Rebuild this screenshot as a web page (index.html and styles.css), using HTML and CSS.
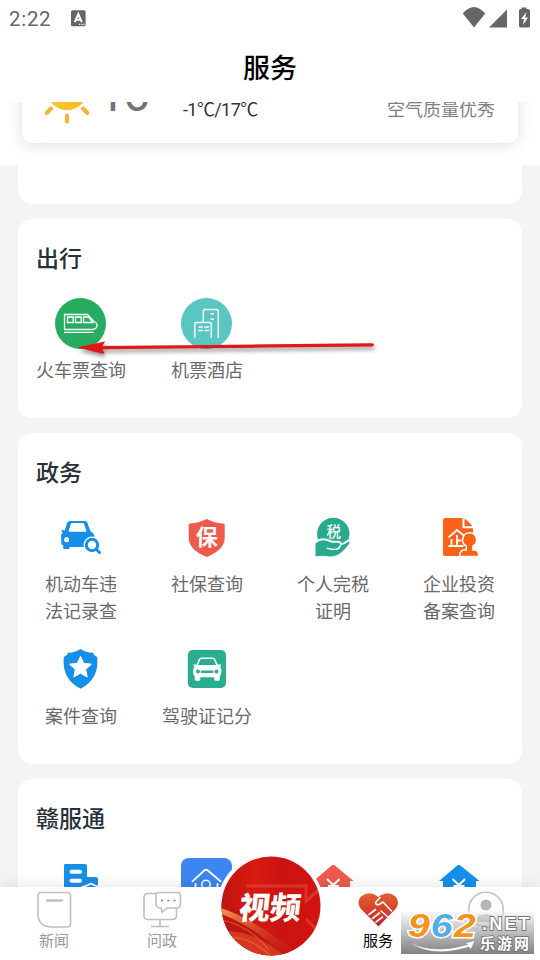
FILE: index.html
```html
<!DOCTYPE html>
<html lang="zh-CN">
<head>
<meta charset="utf-8">
<title>服务</title>
<link rel="stylesheet" href="styles.css">
</head>
<body>
<div class="app">
  <header class="top">
    <div class="status">
      <span class="clock">2:22</span>
      <svg class="ime" width="15" height="17" viewBox="71 10 15 17"><rect x="71" y="10.300" width="14.600" height="16" rx="1.500" fill="#666"/><path d="M74.800 22.200 78.300 14l3.500 8.200M76 19.700h4.600" fill="none" stroke="#fff" stroke-width="2"/><path d="M79 24.300h6" stroke="#fff" stroke-width="1.200" stroke-dasharray="1.200 1"/></svg>
      <svg class="signals" width="70" height="22" viewBox="462 6 70 22" fill="#666">
        <path d="M462.800 12.500Q474-.500 485.200 12.500L474 26.500z" transform="translate(0 1)"/>
        <path d="M489 27.500 507 9.500v18z"/>
        <path d="M521.500 7.500h5v1.500h1.500q2 0 2 1.500v15.500q0 1.500-1.500 1.500h-8q-1.500 0-1.500-1.500V10.500q0-1.500 1.500-1.500h1z"/>
        <path d="m526.500 12-5.500 7h3l-1 6 5-7.500h-3z" fill="#fff"/>
      </svg>
    </div>
    <h1>服务</h1>
  </header>

  <main class="content">
    <section class="weather">
      <div class="weather-card">
        <svg class="sun" width="50" height="44" viewBox="42 81 50 44">
          <defs><linearGradient id="sun" x1="0" y1="0" x2="1" y2="1"><stop offset="0" stop-color="#ffd84a"/><stop offset="1" stop-color="#f7b51b"/></linearGradient></defs>
          <circle cx="67" cy="90" r="20" fill="url(#sun)"/>
          <path d="m51 108.500-4.300 4.500M83 108.500l4.300 4.500M67 115.500v6" stroke="#f4b42b" stroke-width="4" stroke-linecap="round"/>
        </svg>
        <span class="temp">16</span>
        <span class="range">-1℃/17℃</span>
        <span class="air">空气质量优秀</span>
      </div>
    </section>
    <section class="card tail"></section>

    <section class="card">
      <h2>出行</h2>
      <div class="grid">
        <div class="item">
          <svg viewBox="55 298 52 52"><circle cx="80.500" cy="323.500" r="25.500" fill="#27ad60"/><g fill="none" stroke="#fff" stroke-width="1.300"><path d="M64.500 314.500h23l6 6.500q4 2 3.500 5-.5 3-4 3.500H64.500zM64 332.300h29.500M67.500 317h5.700v5.500h-5.700zM75.500 317h5.700v5.500h-5.700zM83.500 317h5l4.500 5.500h-9.500z"/></g></svg>
          <span>火车票查询</span>
        </div>
        <div class="item">
          <svg viewBox="181 298 52 52"><circle cx="206.500" cy="323.500" r="25.500" fill="#59c6c2"/><g fill="none" stroke="#fff" stroke-width="1.500"><path d="M194.700 338v-13.500q0-2 2-2h12.600q2 0 2 2V338M203.300 322v-10.500q0-2 2-2h11q2 0 2 2V338M210.500 313.800h3.500M210.500 319.200h3.500M198.500 327h4.300M204.500 327h4.300M198.500 330.600h4.300M204.500 330.600h4.300"/></g></svg>
          <span>机票酒店</span>
        </div>
      </div>
    </section>

    <section class="card">
      <h2>政务</h2>
      <div class="grid">
        <div class="item">
          <svg viewBox="55 512 52 52"><path d="m64.500 531 2.800-8.500q.6-1.500 2.500-1.500h15q1.900 0 2.500 1.500l3 8.500q4 2 4.200 6v10H69.500v1.300q0 .8-1 .8h-4.300q-1 0-1-1V540q-2-1-2-4 0-3.500 3.300-5z" fill="#168fe8"/><path d="m68.500 531.700 2.200-7.700q.4-1 1.400-1h10.700q1 0 1.400 1l2.300 7.700z" fill="#fff"/><circle cx="66.500" cy="539.700" r="2.500" fill="#fff"/><path d="m61.800 530.800 4 1.200" stroke="#168fe8" stroke-width="2"/><path d="M61.300 534.500h4v10.500h-2.500q-1.500 0-1.500-1.500z" fill="#168fe8"/><circle cx="66.500" cy="539.700" r="2.500" fill="#fff"/><circle cx="92" cy="545" r="8.500" fill="#fff"/><circle cx="92" cy="545" r="5.700" fill="#fff" stroke="#168fe8" stroke-width="3"/><path d="m96.500 549.500 3 3" stroke="#168fe8" stroke-width="3" stroke-linecap="round"/></svg>
          <span>机动车违<br>法记录查</span>
        </div>
        <div class="item">
          <svg viewBox="181 512 52 52"><path d="M206.700 519q8 4 16.500 4.500 1.500.2 1.500 1.800v12.500q0 12-18 19.200-18-7.200-18-19.200v-12.500q0-1.600 1.500-1.800 8.500-.5 16.500-4.500z" fill="#ee5b4c"/><text x="206.800" y="545" class="glyph bold" font-size="22">保</text></svg>
          <span>社保查询</span>
        </div>
        <div class="item">
          <svg viewBox="307 512 52 52"><circle cx="333.300" cy="534" r="16.200" fill="#27ab8c"/><path d="M315.500 543.500q5.500-4.500 10.500-2.800l5.500 2h6.500q2.800.8 2.300 2.800 4-.5 7.500-3.600 2.200-1 1.500 1.500-6 8.500-12 11.600-4 2-9 1.300-7.500-1-12.800.2z" fill="#27ab8c" stroke="#fff" stroke-width="4" paint-order="stroke"/><path d="M327 548.200q4 1.600 9.500 1 3.200-.6 3.800-3.700" fill="none" stroke="#fff" stroke-width="1.400" stroke-linecap="round"/><text x="333.700" y="536.500" class="glyph medium" font-size="14.500">税</text></svg>
          <span>个人完税<br>证明</span>
        </div>
        <div class="item">
          <svg viewBox="433 512 52 52"><path d="M445.500 518h17.300l10.200 10v24q0 4-3 4h-24.500q-2.500 0-2.500-2.500v-33q0-2.500 2.500-2.500z" fill="#fa6317"/><path d="M463.500 517v10.200H474" fill="none" stroke="#fff" stroke-width="2"/><path d="m465 518.500 7.500 7.500H465z" fill="#fa6317"/><path d="m448.500 537.500 8.500-7.500 8.500 7M457 535v10.500M451.500 539v6.500M448.500 546h15M457 540.500h4.500" fill="none" stroke="#fff" stroke-width="1.800"/><path d="M469.500 533.500a6.300 6.300 0 0 1 2.700 12v5.200h3q2.800.4 2.800 5h-17.500q0-4.600 3.300-5h3.200v-5.200a6.300 6.300 0 0 1 2.500-12z" fill="#fa6317" stroke="#fff" stroke-width="3" paint-order="stroke"/></svg>
          <span>企业投资<br>备案查询</span>
        </div>
        <div class="item">
          <svg viewBox="55 644 52 52"><path d="M80.500 649q4 2.800 8.500 3.500l4 .3q.5 2.700 3.500 3.700.8.300.8 1.800 1.700 21-16.800 30.500-18.500-9.500-16.800-30.500 0-1.500.8-1.800 3-1 3.500-3.700l4-.3q4.500-.7 8.500-3.500z" fill="#168fe8"/><path d="m80.500 656.300 3.200 7 7.700.9-5.700 5.200 1.500 7.600-6.700-3.800-6.700 3.800 1.500-7.600-5.700-5.200 7.700-.9z" fill="#fff" stroke="#fff" stroke-linejoin="round"/></svg>
          <span>案件查询</span>
        </div>
        <div class="item">
          <svg viewBox="181 644 52 52"><rect x="187.800" y="650" width="38.200" height="38" rx="5" fill="#2aae90"/><path d="m196.800 666 2.600-6.300q.6-1.500 2.300-1.500h10.800q1.700 0 2.300 1.500l2.600 6.300z" fill="#2aae90" stroke="#fff" stroke-width="1.600"/><path d="M197 665h20.500q4 1.500 4 6.200 0 3.300-1.700 5.300v3q0 1.300-1.300 1.300h-3q-1.200 0-1.200-1.300v-2.200h-14v2.200q0 1.300-1.300 1.300h-3q-1.300 0-1.300-1.300v-3q-1.700-2-1.700-5.300 0-4.700 4-6.200z" fill="#fff"/><path d="M193.500 665.300h4M217 665.300h4" stroke="#fff" stroke-width="1.800"/><circle cx="198" cy="671.500" r="2" fill="#2aae90"/><circle cx="216.500" cy="671.500" r="2" fill="#2aae90"/><path d="M202 671.700h10.500" stroke="#2aae90" stroke-width="2.400" stroke-linecap="round"/></svg>
          <span>驾驶证记分</span>
        </div>
      </div>
    </section>

    <section class="card">
      <h2>赣服通</h2>
      <div class="grid">
        <div class="item"><svg viewBox="55 858 52 52"><path d="M65 864h20q2 0 2 2v11h8.500q2.500 0 2.500 2.500V905H64V865.500q0-1.500 1-1.500z" fill="#168fe8"/><path d="M71.500 871.700h8.500M71.500 880.800h8.500" stroke="#fff" stroke-width="4" stroke-linecap="round"/><path d="M82 887q4-.5 9-3.500 5 3 9 3.500v8H82z" fill="#168fe8" stroke="#fff" stroke-width="1.500"/></svg></div>
        <div class="item"><svg viewBox="181 858 52 52"><rect x="181" y="858" width="51" height="51" rx="8" fill="#3c86f1"/><path d="m192.500 881.300 12-11q1.500-1.200 3 0l13 11M195.500 884v16M217.500 884v16" fill="none" stroke="#fff" stroke-width="1.800" stroke-linecap="round"/><circle cx="206" cy="884.500" r="4.200" fill="none" stroke="#fff" stroke-width="1.500"/></svg></div>
        <div class="item"><svg viewBox="307 858 52 52"><path d="m332 865.300q1.300-1 2.600 0L353.500 881H350v22h-33v-22h-3.500z" fill="#ee5b4c"/><path d="m327 879 6.300 6 6.300-6M333.300 885v10M328 886h11" fill="none" stroke="#fff" stroke-width="2"/></svg></div>
        <div class="item"><svg viewBox="433 858 52 52"><path d="m457.500 865.300q1.300-1 2.600 0L479.500 881H476v22h-33v-22h-4z" fill="#168fe8"/><path d="m452.500 879 6.300 6 6.300-6M458.800 885v10M453.500 886h11" fill="none" stroke="#fff" stroke-width="2"/></svg></div>
      </div>
    </section>
  </main>

  <nav class="tabs">
    <div class="tab">
      <svg viewBox="36 890 36 38"><path d="M41 892.500h26.500q3 0 3 3v28.500q0 3-3 3H50.500Q38 926 38 914v-18.500q0-3 3-3z"/><path d="M47 900.500h15" stroke-width="2.400" stroke-linecap="round"/></svg>
      <span>新闻</span>
    </div>
    <div class="tab">
      <svg viewBox="143 890 40 38"><path d="M157 893.500h-8q-4 0-4 4v18q0 4 4 4h24.500q4 0 4-4v-7M161 920v6M152 926.500h18"/><path d="M160 892.500h18q3.500 0 3.500 3.500v8q0 4-4 4h-9.500l-5 4.300-1-4.300q-5 0-5-4v-8q0-3.500 3-3.500z"/><path d="M162 900.500h14.500" stroke="#888" stroke-dasharray="2.200 4"/></svg>
      <span>问政</span>
    </div>
    <div class="tab"></div>
    <div class="tab active">
      <svg viewBox="357 890 42 38"><defs><linearGradient id="heart" x1="0" y1="0" x2="0" y2="1"><stop offset="0" stop-color="#e26232"/><stop offset="1" stop-color="#c71e24"/></linearGradient></defs><path d="M378.500 926.500 361 909q-5-7 0-12.500 9-6.500 17.500.5 9-7 17-.5 5 5.500 0 12.500z" fill="url(#heart)" stroke="none"/><g stroke="#fff" stroke-width="1.600" stroke-linecap="round" stroke-linejoin="round"><path d="m380 897.500-4.500 5q.5 3 3.500 2l4-2.500 8.500 9M369 914.500l6.500-5M372.500 918.500l7-5.500M376 922l6.500-5M381 911l7 6"/></g></svg>
      <span>服务</span>
    </div>
    <div class="tab">
      <svg viewBox="466 890 40 38"><circle cx="486" cy="909.500" r="17.300"/><circle cx="486" cy="905" r="5.500" fill="#b5b5b8" stroke="none"/><path d="M475 922q2-8 11-8t11 8z" fill="#c4c4c6" stroke="none"/></svg>
    </div>
  </nav>

  <div class="video">
    <svg width="100" height="100" viewBox="0 0 100 100">
      <defs>
        <linearGradient id="red" x1="0" y1="0" x2="1" y2="0"><stop offset="0" stop-color="#bf1310"/><stop offset=".35" stop-color="#d91b12"/><stop offset=".6" stop-color="#c91411"/><stop offset="1" stop-color="#d5130f"/></linearGradient>
        <linearGradient id="gold" x1="0" y1="0" x2="1" y2="1"><stop offset="0" stop-color="#f29a50"/><stop offset="1" stop-color="#d7261a" stop-opacity="0"/></linearGradient>
        <clipPath id="disc"><circle cx="50" cy="50" r="49.500"/></clipPath>
      </defs>
      <g clip-path="url(#disc)">
        <rect width="100" height="100" fill="url(#red)"/>
        <path d="M0 46Q35 62 72 100H0z" fill="#bd1710"/>
        <path d="M0 52Q36 64 78 100L60 96Q30 69 0 58z" fill="url(#gold)"/>
        <path d="M4 75Q32 74 64 100H20z" fill="#e2452c" opacity=".7"/>
        <path d="M10 82q18-2 40 18M0 64q28 5 48 30" fill="none" stroke="#f28b47" stroke-width="1.200" opacity=".5"/>
        <path d="M25 30h60v15l14-12M85 63l13 13" fill="none" stroke="#ec5142" stroke-width="3" opacity=".5"/>
      </g>
    </svg>
    <b>视频</b>
  </div>

  <svg class="arrow" width="306" height="24" viewBox="74 336 306 24"><path d="M77 347.500 105 341.500l-2.500 4.500L372 343.300q2 0 2 1.500t-2 1.700L102.500 349.300l2 4.700z" fill="#e3161a"/></svg>

  <div class="watermark">
    <div class="wm-num"><i class="orange">9</i><i class="blue">6</i><i class="orange">2</i></div>
    <div class="wm-side"><b class="net">.NET</b><b class="cn">乐游网</b></div>
    <svg class="swoosh" width="72" height="16" viewBox="406 938 72 16"><path d="M407.500 940q24 14 60 3.500l-2.500-1.500 10-2.500-4 9-2-2.500q-39 12-61.500-6z" fill="#fff" stroke="#888" stroke-width=".6"/></svg>
  </div>
</div>
</body>
</html>
```

FILE: styles.css
```css
* { box-sizing: border-box; }
body {
  margin: 0;
  font-family: Roboto, "Noto Sans CJK SC", sans-serif;
  background: #f4f4f4;
}
.app {
  position: relative;
  display: flex;
  flex-direction: column;
  width: 540px;
  height: 960px;
  overflow: hidden;
}
.top {
  flex: none;
  height: 102px;
  background: #fff;
}
.status {
  display: flex;
  align-items: center;
  height: 36px;
  padding: 0 8px 0 9px;
}
.clock {
  width: 62px;
  font-size: 20.5px;
  letter-spacing: .7px;
  color: #666;
  padding-top: 2px;
}
.signals { margin-left: auto; margin-bottom: 2px; }
h1 {
  margin: 0;
  height: 66px;
  line-height: 66px;
  text-align: center;
  font-size: 27px;
  font-weight: 500;
  color: #000;
}
.content { flex: 1; min-height: 0; overflow: hidden; }
.weather {
  display: flow-root;
  height: 63px;
  padding: 0 22px;
  background: #fff;
}
.weather-card {
  display: flex;
  height: 71px;
  margin-top: -30px;
  border-radius: 10px;
  background: #fff;
  box-shadow: 0 2px 16px rgba(0, 0, 0, .13);
}
.sun { margin: 9px 0 0 20px; }
.temp {
  width: 76px;
  margin: -5px 0 0 6px;
  font-size: 48px;
  line-height: 56px;
  letter-spacing: -2px;
  color: #737373;
}
.range {
  margin: 25px 0 0 9px;
  font-size: 18px;
  line-height: 26px;
  letter-spacing: -.6px;
  color: #333;
}
.air {
  margin: 25px 23px 0 auto;
  font-size: 18px;
  line-height: 26px;
  color: #808080;
}
.card {
  margin: 0 18px 15px;
  padding: 21px 0 34px;
  border-radius: 14px;
  background: #fff;
}
.card.tail {
  height: 39px;
  padding: 0;
  border-radius: 0 0 14px 14px;
}
.card:last-child { border-radius: 14px 14px 0 0; height: 200px; }
h2 {
  margin: 0 0 18px 18px;
  font-size: 23px;
  line-height: 40px;
  font-weight: 500;
  color: #28313a;
}
.grid {
  display: grid;
  grid-template-columns: repeat(4, 126px);
  row-gap: 19px;
}
.item {
  display: flex;
  flex-direction: column;
  align-items: center;
}
.item svg { width: 52px; height: 52px; margin-bottom: 7px; }
.item span {
  font-size: 18px;
  line-height: 27px;
  text-align: center;
  color: #6a6a6a;
}
.glyph {
  font-family: "Noto Sans CJK SC", sans-serif;
  fill: #fff;
  text-anchor: middle;
}
.bold { font-weight: 700; }
.medium { font-weight: 500; }
.tabs {
  flex: none;
  position: relative;
  display: flex;
  height: 73px;
  background: #fff;
  box-shadow: 0 -2px 12px rgba(0, 0, 0, .09);
}
.tab {
  width: 108px;
  padding-top: 3px;
  display: flex;
  flex-direction: column;
  align-items: center;
  font-size: 15px;
  line-height: 22px;
  color: #999;
}
.tab svg {
  height: 38px;
  margin-bottom: 2px;
  fill: none;
  stroke: #c0c0c2;
  stroke-width: 1.6;
}
.tab.active { color: #000; }
.video {
  position: absolute;
  left: 217px;
  top: 853px;
  width: 107px;
  height: 107px;
  padding: 3px 3.5px;
  border-radius: 50%;
  background: #fff;
}
.video svg { display: block; }
.video b {
  position: absolute;
  left: 22px;
  top: 36px;
  font-size: 31px;
  line-height: 40px;
  font-weight: 900;
  color: #fff;
  transform: skewX(-6deg);
}
.arrow {
  position: absolute;
  left: 74px;
  top: 336px;
  filter: drop-shadow(1px 3px 2px rgba(0, 0, 0, .45));
}
.watermark {
  position: absolute;
  left: 401px;
  top: 911px;
  display: flex;
  width: 133px;
  height: 43px;
  background: linear-gradient(rgba(245, 245, 245, .4), rgba(125, 125, 125, .97));
}
.wm-num {
  display: flex;
  margin: -5px 0 0 9px;
  width: 71px;
  font: italic 700 33px/40px "Liberation Sans", sans-serif;
}
.wm-num i {
  width: 23px;
  -webkit-text-stroke: 3px #fff;
  paint-order: stroke fill;
  transform: scaleX(1.2);
}
.orange { color: #f6921e; }
.blue { color: #55aee5; }
.wm-side { display: flex; flex-direction: column; color: #fff; }
.wm-side b {
  -webkit-text-stroke: 1.8px #777;
  paint-order: stroke fill;
  white-space: nowrap;
}
.net {
  height: 25px;
  padding-left: 1px;
  font: 700 18px/27px "Liberation Sans", sans-serif;
  letter-spacing: 2.2px;
}
.cn { margin-left: -1px; font-size: 15px; line-height: 16px; font-weight: 700; letter-spacing: 2px; }
.swoosh {
  position: absolute;
  left: 5px;
  top: 28px;
}
```
